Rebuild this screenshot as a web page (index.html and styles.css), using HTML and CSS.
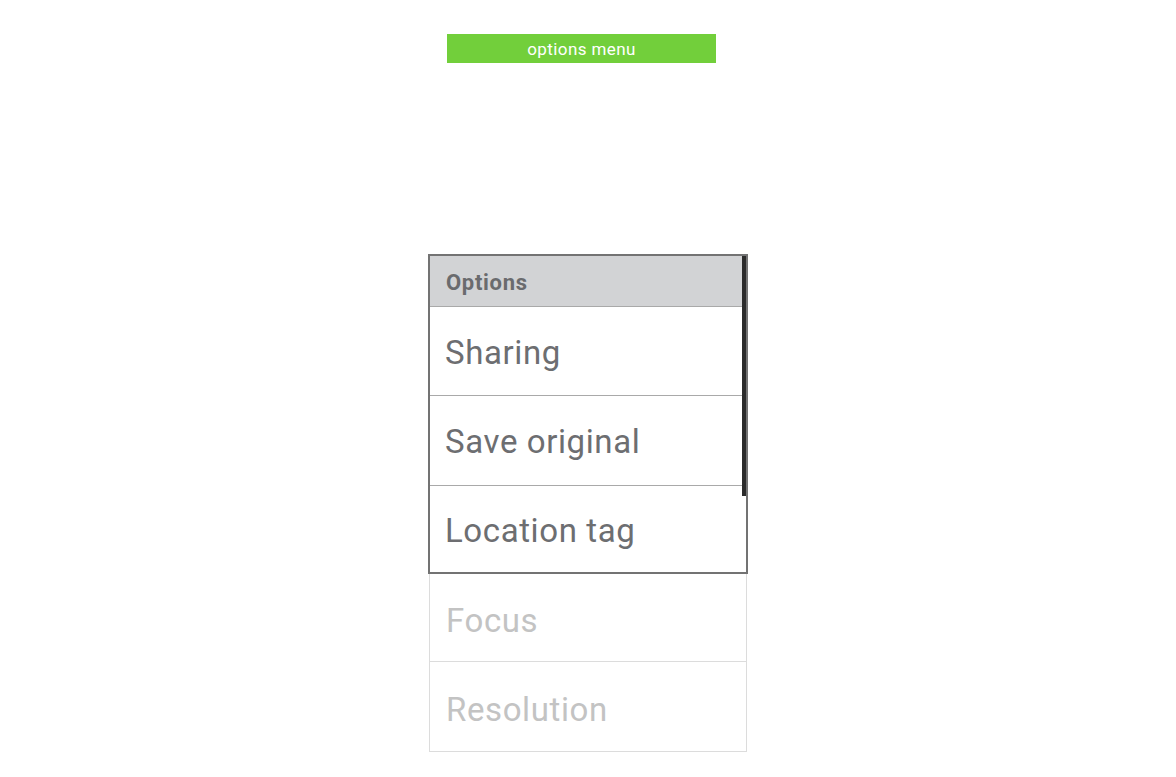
FILE: index.html
```html
<!DOCTYPE html>
<html lang="en">
<head>
    <meta charset="UTF-8">
    <meta name="viewport" content="width=device-width, initial-scale=1.0">
    <title>Options menu</title>
    <link rel="stylesheet" href="styles.css">
</head>
<body>

    <div class="title-bar">options menu</div>

    <div class="menu-area">
        <!-- Open menu -->
        <div class="menu">
            <div class="menu-header">Options</div>
            <div class="menu-item">Sharing</div>
            <div class="menu-item tall">Save original</div>
            <div class="menu-item last">Location tag</div>
            <div class="scrollbar"></div>
        </div>

        <!-- Items below the menu -->
        <div class="menu-rest">
            <div class="menu-item faded">Focus</div>
            <div class="menu-item faded">Resolution</div>
        </div>
    </div>

</body>
</html>
```

FILE: styles.css
```css
body {
    font-family: Roboto, "Noto Sans", sans-serif;
    margin: 0;
    background: #ffffff;
}

.title-bar {
    width: 269px;
    height: 29px;
    margin: 34px 0 0 447px;
    background: #72cf3b;
    color: #ffffff;
    font-size: 17px;
    letter-spacing: 0.4px;
    line-height: 30px;
    text-align: center;
}

.menu-area {
    display: flex;
    flex-direction: column;
    align-items: center;
    margin-top: 191px;
}

.menu {
    position: relative;
    width: 316px;
    border: 2px solid #737373;
    background: #ffffff;
}

.menu-header {
    height: 51px;
    display: flex;
    align-items: center;
    padding-left: 16px;
    padding-top: 3px;
    box-sizing: border-box;
    background: #d2d3d5;
    border-bottom: 1px solid #a9a9a9;
    color: #6a6b6e;
    font-size: 22px;
    letter-spacing: 0.7px;
    font-weight: bold;
}

.menu-item {
    height: 89px;
    display: flex;
    align-items: center;
    padding-left: 15px;
    padding-top: 2px;
    box-sizing: border-box;
    border-bottom: 1px solid #a9a9a9;
    color: #6d6e71;
    font-size: 33px;
    letter-spacing: 0.6px;
}

.menu-item.tall {
    height: 90px;
}

.menu-item.last {
    height: 86px;
    padding-top: 3px;
    border-bottom: none;
}

.scrollbar {
    position: absolute;
    top: 0;
    right: 0;
    width: 4px;
    height: 240px;
    background: #2b2b2b;
}

.menu-rest {
    width: 316px;
    border: 1px solid #dcdcdc;
    border-top: none;
}

.menu-item.faded {
    height: 88px;
    color: #c3c3c3;
    padding-left: 16px;
    padding-top: 5px;
    border-bottom: 1px solid #dcdcdc;
}

.menu-item.faded:last-child {
    height: 89px;
    border-bottom: none;
}
```
